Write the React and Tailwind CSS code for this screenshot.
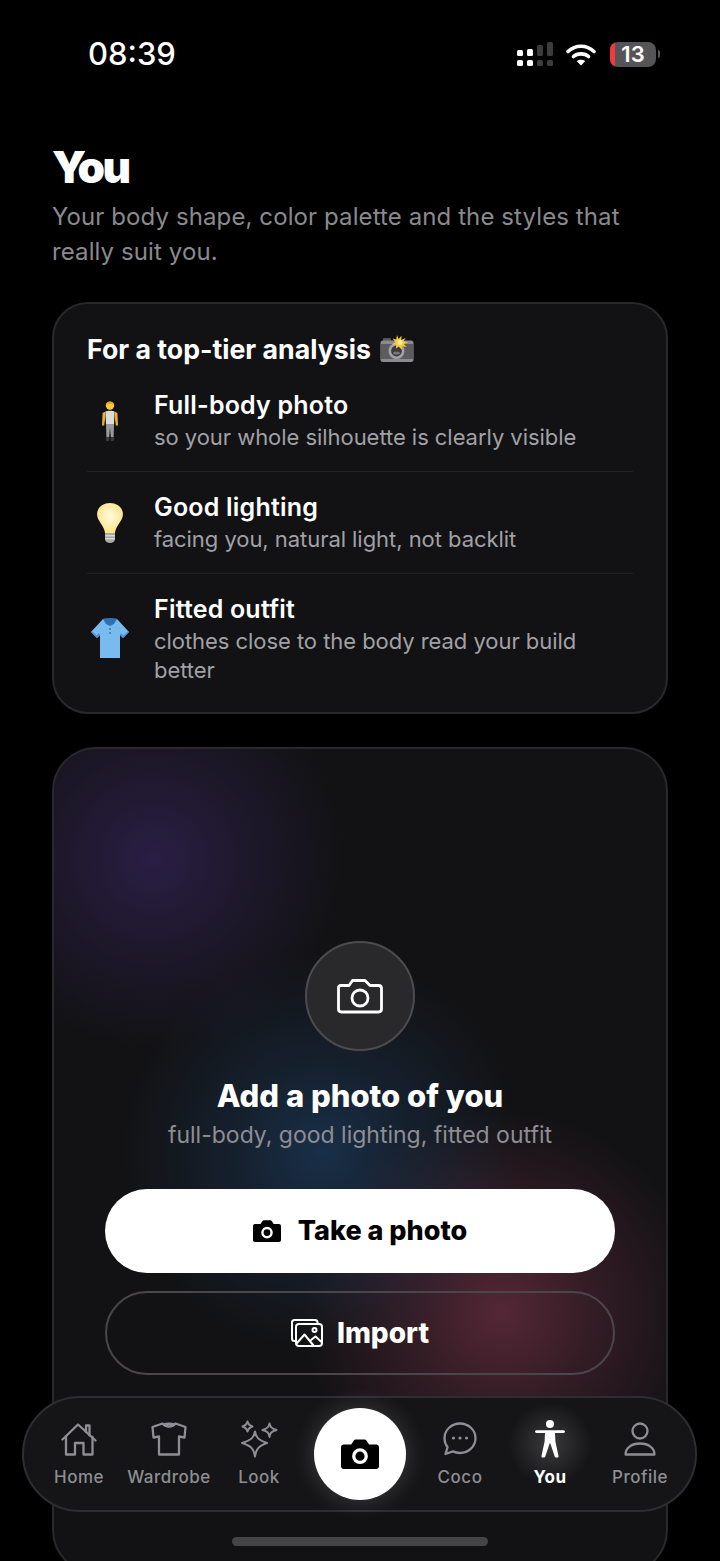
const font = { fontFamily: 'Inter, "Noto Sans", sans-serif' };

function SignalIcon() {
  return (
    <svg width="37" height="26" viewBox="0 0 37 26">
      <rect x="0" y="19" width="6" height="6" rx="1.5" fill="#fff" />
      <rect x="10" y="19" width="6" height="6" rx="1.5" fill="#fff" />
      <rect x="20" y="19" width="6" height="6" rx="1.5" fill="#3c3c3e" />
      <rect x="30" y="19" width="6" height="6" rx="1.5" fill="#3c3c3e" />
      <rect x="0" y="9" width="6" height="6" rx="1.5" fill="#fff" />
      <rect x="10" y="8" width="6" height="7" rx="1.5" fill="#fff" />
      <rect x="20" y="4" width="6" height="11" rx="1.5" fill="#3c3c3e" />
      <rect x="30" y="1" width="6" height="14" rx="1.5" fill="#3c3c3e" />
    </svg>
  );
}

function WifiIcon() {
  return (
    <svg width="30" height="24" viewBox="0 0 30 24" fill="none">
      <path d="M2 9.5C9.5 2.5 20.5 2.5 28 9.5" stroke="#fff" strokeWidth="3.6" strokeLinecap="round" />
      <path d="M7.5 14.5C11.5 11 18.5 11 22.5 14.5" stroke="#fff" strokeWidth="3.6" strokeLinecap="round" />
      <path d="M15 23.5L10.8 19.2C13 17.3 17 17.3 19.2 19.2Z" fill="#fff" />
    </svg>
  );
}

function Battery() {
  return (
    <div className="flex items-center gap-[2px]">
      <div className="relative flex h-[25px] w-[46px] items-center justify-center overflow-hidden rounded-[8px] bg-[#555557]">
        <div className="absolute inset-y-0 left-0 w-[5px] bg-[#f2393d]" />
        <span className="relative text-[22px] leading-none font-semibold text-white">13</span>
      </div>
      <div className="h-[8px] w-[2px] rounded-r-full bg-[#555557]" />
    </div>
  );
}

function PersonEmoji() {
  return (
    <svg width="18" height="42" viewBox="0 0 18 42">
      <circle cx="9" cy="5.6" r="4.2" fill="#fbc934" />
      <path d="M4.8 5C4.8 .8 13.2 .8 13.2 5 11 3.4 7 3.4 4.8 5Z" fill="#e0a521" />
      <path d="M4.4 11.5C6 10.6 12 10.6 13.6 11.5L13 24H5Z" fill="#dcdcdc" />
      <path d="M4.4 11.5L1.6 13 1 25.5 3.2 25.5 4.4 16Z" fill="#eeb02f" />
      <path d="M13.6 11.5L16.4 13 17 25.5 14.8 25.5 13.6 16Z" fill="#eeb02f" />
      <path d="M5 24H13L12.6 37H9.8L9 27.5 8.2 37H5.4Z" fill="#9a9a9a" />
      <rect x="4.8" y="37" width="3.6" height="4" rx="1" fill="#3a3a3a" />
      <rect x="9.6" y="37" width="3.6" height="4" rx="1" fill="#3a3a3a" />
    </svg>
  );
}

function BulbEmoji() {
  return (
    <svg width="28" height="42" viewBox="0 0 26 42" preserveAspectRatio="none">
      <defs>
        <radialGradient id="bulb" cx="50%" cy="45%" r="60%">
          <stop offset="0%" stopColor="#fffbe0" />
          <stop offset="100%" stopColor="#fbe27e" />
        </radialGradient>
      </defs>
      <path d="M13 1C5.8 1 1 6 1 12.2 1 19 7.6 23 8.4 31H17.6C18.4 23 25 19 25 12.2 25 6 20.2 1 13 1Z" fill="url(#bulb)" />
      <path d="M8.4 31H17.6V37C17.6 39.5 15.5 41 13 41S8.4 39.5 8.4 37Z" fill="#a9a9a6" />
      <rect x="8.4" y="33" width="9.2" height="1.4" fill="#d6d6d2" />
      <rect x="8.4" y="36" width="9.2" height="1.4" fill="#d6d6d2" />
    </svg>
  );
}

function ShirtEmoji() {
  return (
    <svg width="40" height="42" viewBox="0 0 40 42">
      <path d="M13 2L1 15 7 21 10 18V41H30V18L33 21 39 15 27 2Z" fill="#79baef" />
      <path d="M13 2C15 0.6 25 0.6 27 2L24 7 20 9 16 7Z" fill="#2f6fb5" />
      <path d="M1 15L7 21 10 18 9 16 6.5 18.5 2 14Z" fill="#4c93d6" />
      <path d="M39 15L33 21 30 18 31 16 33.5 18.5 38 14Z" fill="#4c93d6" />
      <circle cx="20" cy="12" r="0.9" fill="#2f6fb5" />
      <circle cx="20" cy="16" r="0.9" fill="#2f6fb5" />
    </svg>
  );
}

function FlashCameraEmoji() {
  return (
    <svg width="34" height="28" viewBox="0 0 34 28" className="shrink-0">
      <rect x="3" y="3" width="8" height="4" rx="1" fill="#55555a" />
      <rect x="0.5" y="5.5" width="33" height="21.5" rx="2.5" fill="#8b8b8f" />
      <rect x="0.5" y="9" width="33" height="15" fill="#5c5c60" />
      <circle cx="16.5" cy="16" r="8" fill="#a3a3a6" />
      <circle cx="16.5" cy="16" r="5.4" fill="#3c3c40" />
      <ellipse cx="16.5" cy="18" rx="3.4" ry="1.6" fill="#77777b" />
      <path d="M17 0L18.6 4 21.5 0.8 21.3 5 25.6 3 23.4 6.6 28 7 23.8 9 26.6 12 22.2 11.2 21.6 14.4 18.8 11.6 16 13.6 16.2 9.8 12.2 9.4 15.4 7 12.6 3.4 16.2 4.6Z" fill="#ffc83a" />
      <circle cx="20" cy="7.5" r="2.4" fill="#fff3b4" />
    </svg>
  );
}

function Tip({ emoji, title, text, last }) {
  return (
    <div className={`flex items-center ${last ? 'pt-[20px]' : 'border-b border-[#222225] pt-[20px] pb-[19px]'}`}>
      <div className={`flex w-[46px] shrink-0 justify-center ${last ? 'mb-[4px]' : ''}`}>{emoji}</div>
      <div className="ml-[21px]">
        <p className="text-[25px] leading-[30px] font-semibold tracking-[0.2px] text-white">{title}</p>
        <p className="mt-[3px] text-[22px] leading-[29px] tracking-[-0.05px] text-[#a1a1a6]">{text}</p>
      </div>
    </div>
  );
}

function CameraOutline() {
  return (
    <svg width="46" height="36" viewBox="0 0 46 36" fill="none" stroke="#fff" strokeWidth="2.8" strokeLinejoin="round">
      <path d="M4 7.5H12L15.5 2.5H28L33 7.5H41.5C43.2 7.5 44.5 8.8 44.5 10.5V31C44.5 32.7 43.2 34 41.5 34H4.5C2.8 34 1.5 32.7 1.5 31V10C1.5 8.6 2.6 7.5 4 7.5Z" />
      <circle cx="23" cy="20" r="8" />
    </svg>
  );
}

function CameraSolid({ width, height }) {
  return (
    <svg width={width} height={height} viewBox="0 0 28 22">
      <path
        fillRule="evenodd"
        fill="#000"
        d="M2 4H7.5L9.5 1C9.8 .5 10.2 .3 10.8 .3H17.4C18 .3 18.4 .5 18.7 1L20.7 4H26C27.1 4 28 4.9 28 6V20C28 21.1 27.1 22 26 22H2C.9 22 0 21.1 0 20V6C0 4.9 .9 4 2 4ZM14 6.8A5.8 5.8 0 1 0 14 18.4 5.8 5.8 0 1 0 14 6.8ZM14 9.2A3.4 3.4 0 1 1 14 16 3.4 3.4 0 1 1 14 9.2Z"
      />
    </svg>
  );
}

function ImportIcon() {
  return (
    <svg width="32" height="28" viewBox="0 0 32 28" fill="none" stroke="#fff" strokeWidth="2" strokeLinejoin="round" strokeLinecap="round">
      <path d="M4.5 22H3.5C2 22 1 21 1 19.5V3.5C1 2 2 1 3.5 1H24C25.5 1 26.5 2 26.5 3.5V4.5" />
      <rect x="5" y="5" width="26" height="22" rx="3" />
      <circle cx="23.5" cy="11" r="2" />
      <path d="M6 24L13.5 15.5 22.5 26.5" />
      <path d="M20 21L24.5 17.5 30.5 23" />
    </svg>
  );
}

const navStroke = { fill: 'none', stroke: 'currentColor', strokeWidth: 2.3, strokeLinejoin: 'round', strokeLinecap: 'round' };

function HomeIcon() {
  return (
    <svg width="36" height="34" viewBox="0 0 36 34" {...navStroke}>
      <path d="M1.5 17.5L17 2.5 34.5 18.5" />
      <path d="M25 10V3.5H28.5V13.5" />
      <path d="M5 14.5V32.5H14V21H22.5V32.5H31.5V15" />
    </svg>
  );
}

function ShirtIcon() {
  return (
    <svg width="36" height="34" viewBox="0 0 36 34" {...navStroke}>
      <path d="M11.5 1.5L1.5 5 2.5 15.5 8 14.5V32.5H28V14.5L33.5 15.5 34.5 5 24.5 1.5C21.5 5.5 14.5 5.5 11.5 1.5Z" />
      <path d="M13 2.5C15 1.5 21 1.5 23 2.5" />
    </svg>
  );
}

function SparklesIcon() {
  return (
    <svg width="38" height="38" viewBox="0 0 38 38" {...navStroke} strokeWidth="2">
      <path d="M15 11.5C16 17.5 18.5 20 27 23 18.5 26 16 29 15 36.5 14 29 11.5 26 2 23 11.5 20 14 17.5 15 11.5Z" />
      <path d="M7.5 1.5C8 4 9 5.2 12.5 6.5 9 7.8 8 9 7.5 11.5 7 9 6 7.8 2.5 6.5 6 5.2 7 4 7.5 1.5Z" />
      <path d="M29.5 3.5C30 7 31.5 8.5 36.5 10 31.5 11.5 30 13 29.5 17 29 13 27.5 11.5 22.5 10 27.5 8.5 29 7 29.5 3.5Z" />
    </svg>
  );
}

function CocoIcon() {
  return (
    <svg width="34" height="34" viewBox="0 0 34 34" {...navStroke}>
      <path d="M17 1.5C8.5 1.5 1.5 8 1.5 16.2 1.5 19.6 2.7 22.7 4.6 25.2L2.5 32 9.8 29.4C12 30.5 14.4 31 17 31 25.5 31 32.5 24.4 32.5 16.2 32.5 8 25.5 1.5 17 1.5Z" />
      <circle cx="10.5" cy="16" r="1.6" fill="currentColor" stroke="none" />
      <circle cx="17" cy="16" r="1.6" fill="currentColor" stroke="none" />
      <circle cx="23.5" cy="16" r="1.6" fill="currentColor" stroke="none" />
    </svg>
  );
}

function BodyIcon() {
  return (
    <svg width="30" height="38" viewBox="0 0 30 38" fill="currentColor">
      <circle cx="15" cy="4" r="4" />
      <path d="M1.5 10.2H28.5C29.6 10.2 30 11 30 11.6 30 12.4 29.4 13 28.5 13H20L20.4 21.5 23.5 36C23.7 37 23 37.6 22.2 37.6H21C20.4 37.6 19.9 37.2 19.7 36.6L15.4 23.5H14.6L10.3 36.6C10.1 37.2 9.6 37.6 9 37.6H7.8C7 37.6 6.3 37 6.5 36L9.6 21.5 10 13H1.5C.6 13 0 12.4 0 11.6 0 11 .4 10.2 1.5 10.2Z" />
    </svg>
  );
}

function ProfileIcon() {
  return (
    <svg width="32" height="34" viewBox="0 0 32 34" {...navStroke}>
      <circle cx="16" cy="9" r="7.5" />
      <path d="M1.5 32.5C1.5 26 7.5 21.5 16 21.5S30.5 26 30.5 32.5Z" />
    </svg>
  );
}

function NavItem({ icon, label, active }) {
  return (
    <div className={`relative flex w-[90px] shrink-0 flex-col items-center ${active ? 'text-white' : 'text-[#8e8e93]'}`}>
      {active && (
        <div className="absolute top-[-18px] left-[3px] h-[84px] w-[84px] rounded-full bg-[radial-gradient(circle,rgba(255,255,255,0.16),rgba(255,255,255,0)_70%)]" />
      )}
      <div className="relative flex h-[38px] items-center justify-center">{icon}</div>
      <span className={`relative mt-[7px] text-[17px] leading-[24px] tracking-[0.5px] ${active ? 'font-bold' : 'font-medium'}`}>{label}</span>
    </div>
  );
}

export default function App() {
  return (
    <div style={font} className="relative h-[1561px] w-[720px] overflow-hidden bg-black">
      <div className="flex items-center justify-between pt-[35px] pr-[60px] pl-[88px]">
        <span className="text-[31px] leading-[38px] font-medium text-white">08:39</span>
        <div className="flex items-center">
          <SignalIcon />
          <div className="mr-[14px] ml-[12px]"><WifiIcon /></div>
          <Battery />
        </div>
      </div>

      <div className="px-[52px]">
        <h1 className="mt-[68px] text-[44px] leading-[52px] font-black tracking-[-2.5px] text-white">You</h1>
        <p className="mt-[6px] text-[24px] leading-[35px] tracking-[0.1px] text-[#8a8a8e]">
          Your body shape, color palette and the styles that really suit you.
        </p>

        <div className="mt-[33px] rounded-[36px] border-2 border-[#29292c] bg-[#121214] px-[33px] pt-[27px] pb-[27px]">
          <div className="flex items-center gap-[9px]">
            <h2 className="text-[26.7px] leading-[36px] font-bold text-white">For a top-tier analysis</h2>
            <FlashCameraEmoji />
          </div>
          <div className="mt-[3px]">
            <Tip emoji={<PersonEmoji />} title="Full-body photo" text="so your whole silhouette is clearly visible" />
            <Tip emoji={<BulbEmoji />} title="Good lighting" text="facing you, natural light, not backlit" />
            <Tip emoji={<ShirtEmoji />} title="Fitted outfit" text="clothes close to the body read your build better" last />
          </div>
        </div>

        <div className="mt-[33px] flex h-[827px] flex-col items-center rounded-[44px] border-2 border-[#29292c] bg-[#121214] bg-[radial-gradient(circle_at_100px_110px,rgba(58,38,100,0.6),rgba(58,38,100,0.3)_90px,rgba(58,38,100,0)_190px),radial-gradient(circle_at_268px_403px,rgba(30,68,110,0.58),rgba(30,68,110,0.28)_90px,rgba(30,68,110,0)_200px),radial-gradient(circle_at_448px_563px,rgba(120,50,72,0.66),rgba(120,50,72,0.33)_90px,rgba(120,50,72,0)_200px)] px-[51px] pt-[192px]">
          <div className="flex h-[110px] w-[110px] items-center justify-center rounded-full border-2 border-[#4c4c4f] bg-[#29292c]">
            <CameraOutline />
          </div>
          <h2 className="mt-[25px] text-[31px] leading-[40px] font-extrabold text-white">Add a photo of you</h2>
          <p className="mt-[3px] text-[23px] leading-[32px] text-[#8e8e93]">full-body, good lighting, fitted outfit</p>
          <button className="mt-[38px] flex h-[84px] w-full items-center justify-center gap-[17px] rounded-full bg-white text-[27px] font-extrabold text-black">
            <CameraSolid width={28} height={22} />
            Take a photo
          </button>
          <button className="mt-[18px] flex h-[84px] w-full items-center justify-center gap-[14px] rounded-full border-2 border-[#4a4649] text-[28px] font-extrabold text-white">
            <ImportIcon />
            Import
          </button>
        </div>
      </div>

      <div className="absolute top-[1396px] left-[22px] flex h-[116px] w-[675px] items-center rounded-[58px] border-2 border-[#2e2e32] bg-[#151518] pl-[10px]">
        <NavItem icon={<HomeIcon />} label="Home" />
        <NavItem icon={<ShirtIcon />} label="Wardrobe" />
        <NavItem icon={<SparklesIcon />} label="Look" />
        <div className="mr-[9px] ml-[10px] flex h-[92px] w-[92px] shrink-0 items-center justify-center rounded-full bg-white shadow-[0_0_24px_rgba(255,255,255,0.18)]">
          <CameraSolid width={38} height={30} />
        </div>
        <NavItem icon={<CocoIcon />} label="Coco" />
        <NavItem icon={<BodyIcon />} label="You" active />
        <NavItem icon={<ProfileIcon />} label="Profile" />
      </div>

      <div className="absolute top-[1537px] left-[232px] h-[9px] w-[256px] rounded-full bg-[#444446]" />
    </div>
  );
}
